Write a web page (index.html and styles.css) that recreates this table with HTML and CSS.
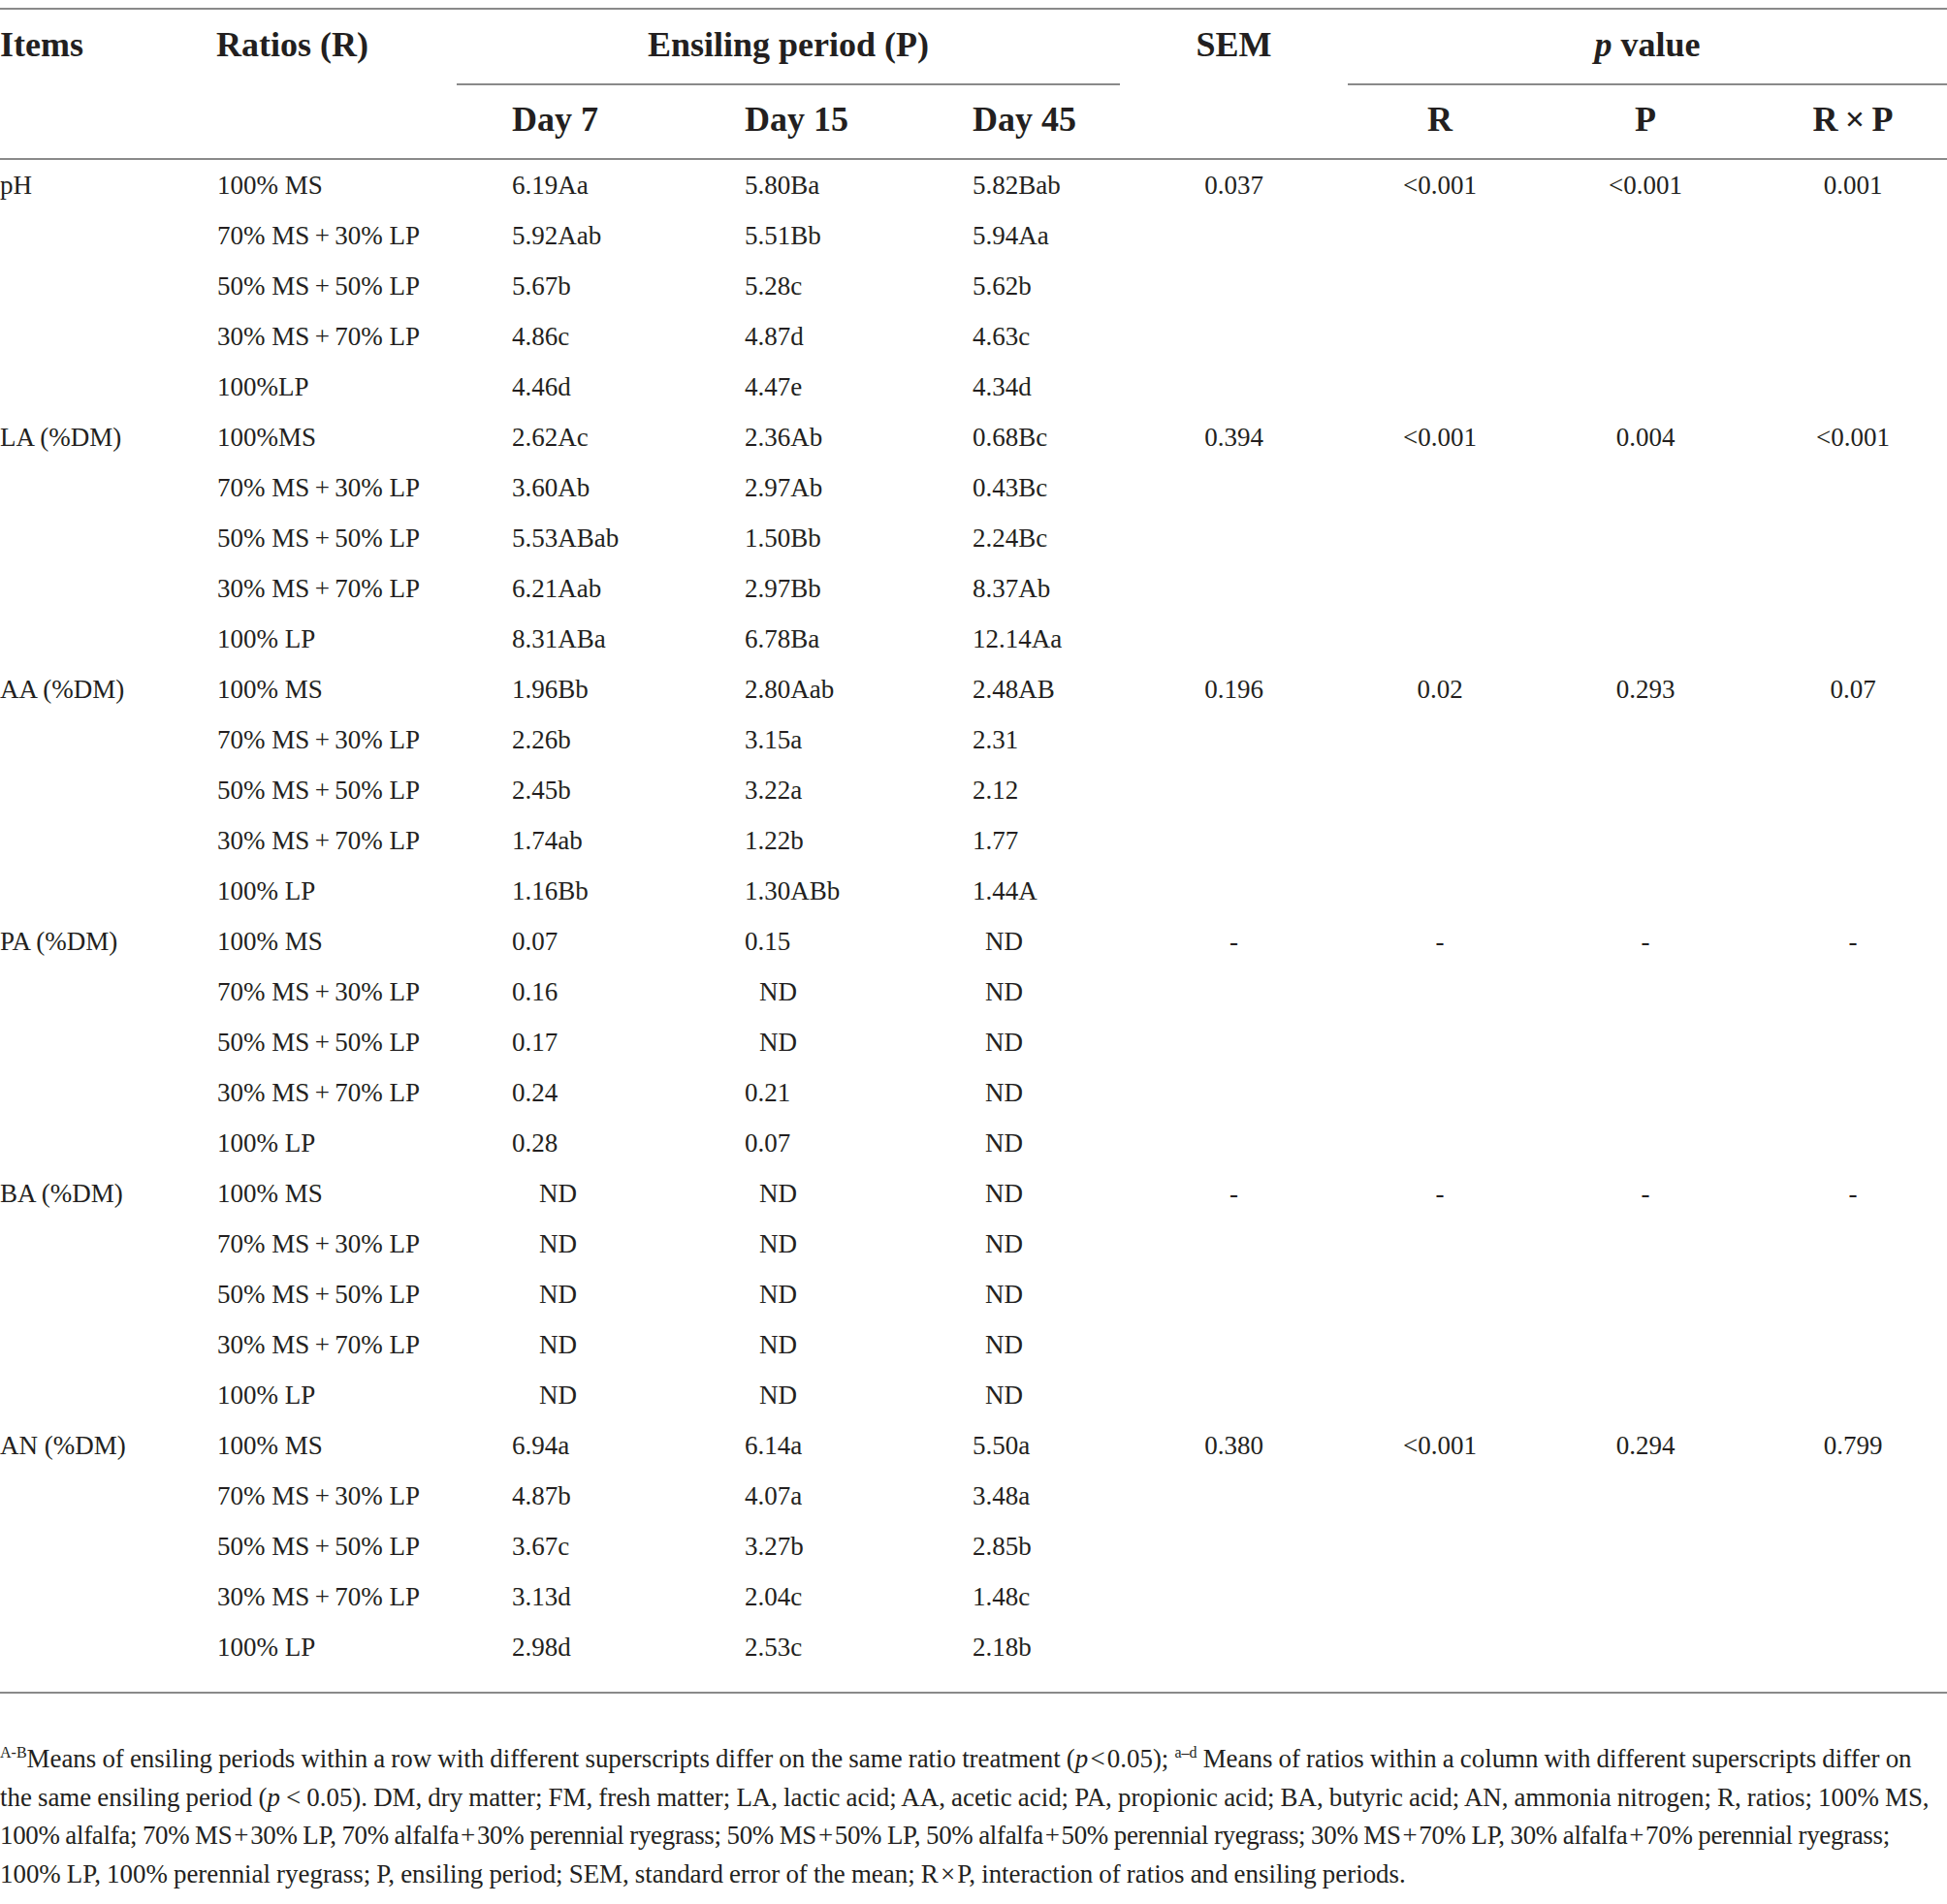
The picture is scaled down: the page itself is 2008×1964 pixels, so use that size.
FILE: index.html
```html
<!DOCTYPE html>
<html lang="en">
<head>
<meta charset="utf-8">
<title>Table</title>
<link rel="stylesheet" href="styles.css">
</head>
<body>
<table class="tbl">
  <colgroup>
    <col class="c-items"><col class="c-ratio"><col class="c-d7"><col class="c-d15"><col class="c-d45"><col class="c-sem"><col class="c-r"><col class="c-p"><col class="c-rp">
  </colgroup>
  <thead>
    <tr class="h1">
      <th class="span2 left" rowspan="2">Items</th>
      <th class="span2 left ratio" rowspan="2">Ratios (R)</th>
      <th class="group" colspan="3">Ensiling period (P)</th>
      <th class="span2" rowspan="2">SEM</th>
      <th class="group" colspan="3"><i>p</i> value</th>
    </tr>
    <tr class="h2">
      <th class="day">Day 7</th>
      <th class="day">Day 15</th>
      <th class="day">Day 45</th>
      <th>R</th>
      <th>P</th>
      <th>R&#8201;×&#8201;P</th>
    </tr>
  </thead>
  <tbody>
    <tr><td>pH</td><td>100% MS</td><td>6.19Aa</td><td>5.80Ba</td><td>5.82Bab</td><td>0.037</td><td>&lt;0.001</td><td>&lt;0.001</td><td>0.001</td></tr>
    <tr><td></td><td>70% MS&#8201;+&#8201;30% LP</td><td>5.92Aab</td><td>5.51Bb</td><td>5.94Aa</td><td></td><td></td><td></td><td></td></tr>
    <tr><td></td><td>50% MS&#8201;+&#8201;50% LP</td><td>5.67b</td><td>5.28c</td><td>5.62b</td><td></td><td></td><td></td><td></td></tr>
    <tr><td></td><td>30% MS&#8201;+&#8201;70% LP</td><td>4.86c</td><td>4.87d</td><td>4.63c</td><td></td><td></td><td></td><td></td></tr>
    <tr><td></td><td>100%LP</td><td>4.46d</td><td>4.47e</td><td>4.34d</td><td></td><td></td><td></td><td></td></tr>
    <tr><td>LA (%DM)</td><td>100%MS</td><td>2.62Ac</td><td>2.36Ab</td><td>0.68Bc</td><td>0.394</td><td>&lt;0.001</td><td>0.004</td><td>&lt;0.001</td></tr>
    <tr><td></td><td>70% MS&#8201;+&#8201;30% LP</td><td>3.60Ab</td><td>2.97Ab</td><td>0.43Bc</td><td></td><td></td><td></td><td></td></tr>
    <tr><td></td><td>50% MS&#8201;+&#8201;50% LP</td><td>5.53ABab</td><td>1.50Bb</td><td>2.24Bc</td><td></td><td></td><td></td><td></td></tr>
    <tr><td></td><td>30% MS&#8201;+&#8201;70% LP</td><td>6.21Aab</td><td>2.97Bb</td><td>8.37Ab</td><td></td><td></td><td></td><td></td></tr>
    <tr><td></td><td>100% LP</td><td>8.31ABa</td><td>6.78Ba</td><td>12.14Aa</td><td></td><td></td><td></td><td></td></tr>
    <tr><td>AA (%DM)</td><td>100% MS</td><td>1.96Bb</td><td>2.80Aab</td><td>2.48AB</td><td>0.196</td><td>0.02</td><td>0.293</td><td>0.07</td></tr>
    <tr><td></td><td>70% MS&#8201;+&#8201;30% LP</td><td>2.26b</td><td>3.15a</td><td>2.31</td><td></td><td></td><td></td><td></td></tr>
    <tr><td></td><td>50% MS&#8201;+&#8201;50% LP</td><td>2.45b</td><td>3.22a</td><td>2.12</td><td></td><td></td><td></td><td></td></tr>
    <tr><td></td><td>30% MS&#8201;+&#8201;70% LP</td><td>1.74ab</td><td>1.22b</td><td>1.77</td><td></td><td></td><td></td><td></td></tr>
    <tr><td></td><td>100% LP</td><td>1.16Bb</td><td>1.30ABb</td><td>1.44A</td><td></td><td></td><td></td><td></td></tr>
    <tr><td>PA (%DM)</td><td>100% MS</td><td>0.07</td><td>0.15</td><td class="nd">ND</td><td>-</td><td>-</td><td>-</td><td>-</td></tr>
    <tr><td></td><td>70% MS&#8201;+&#8201;30% LP</td><td>0.16</td><td class="nd">ND</td><td class="nd">ND</td><td></td><td></td><td></td><td></td></tr>
    <tr><td></td><td>50% MS&#8201;+&#8201;50% LP</td><td>0.17</td><td class="nd">ND</td><td class="nd">ND</td><td></td><td></td><td></td><td></td></tr>
    <tr><td></td><td>30% MS&#8201;+&#8201;70% LP</td><td>0.24</td><td>0.21</td><td class="nd">ND</td><td></td><td></td><td></td><td></td></tr>
    <tr><td></td><td>100% LP</td><td>0.28</td><td>0.07</td><td class="nd">ND</td><td></td><td></td><td></td><td></td></tr>
    <tr><td>BA (%DM)</td><td>100% MS</td><td class="nd">ND</td><td class="nd">ND</td><td class="nd">ND</td><td>-</td><td>-</td><td>-</td><td>-</td></tr>
    <tr><td></td><td>70% MS&#8201;+&#8201;30% LP</td><td class="nd">ND</td><td class="nd">ND</td><td class="nd">ND</td><td></td><td></td><td></td><td></td></tr>
    <tr><td></td><td>50% MS&#8201;+&#8201;50% LP</td><td class="nd">ND</td><td class="nd">ND</td><td class="nd">ND</td><td></td><td></td><td></td><td></td></tr>
    <tr><td></td><td>30% MS&#8201;+&#8201;70% LP</td><td class="nd">ND</td><td class="nd">ND</td><td class="nd">ND</td><td></td><td></td><td></td><td></td></tr>
    <tr><td></td><td>100% LP</td><td class="nd">ND</td><td class="nd">ND</td><td class="nd">ND</td><td></td><td></td><td></td><td></td></tr>
    <tr><td>AN (%DM)</td><td>100% MS</td><td>6.94a</td><td>6.14a</td><td>5.50a</td><td>0.380</td><td>&lt;0.001</td><td>0.294</td><td>0.799</td></tr>
    <tr><td></td><td>70% MS&#8201;+&#8201;30% LP</td><td>4.87b</td><td>4.07a</td><td>3.48a</td><td></td><td></td><td></td><td></td></tr>
    <tr><td></td><td>50% MS&#8201;+&#8201;50% LP</td><td>3.67c</td><td>3.27b</td><td>2.85b</td><td></td><td></td><td></td><td></td></tr>
    <tr><td></td><td>30% MS&#8201;+&#8201;70% LP</td><td>3.13d</td><td>2.04c</td><td>1.48c</td><td></td><td></td><td></td><td></td></tr>
    <tr class="last"><td></td><td>100% LP</td><td>2.98d</td><td>2.53c</td><td>2.18b</td><td></td><td></td><td></td><td></td></tr>
  </tbody>
</table>
<p class="note"><span class="sup">A-B</span>Means of ensiling periods within a row with different superscripts differ on the same ratio treatment (<i>p</i>&#8202;&lt;&#8202;0.05); <span class="sup">a–d</span> Means of ratios within a column with different superscripts differ on<br>the same ensiling period (<i>p</i> &lt; 0.05). DM, dry matter; FM, fresh matter; LA, lactic acid; AA, acetic acid; PA, propionic acid; BA, butyric acid; AN, ammonia nitrogen; R, ratios; 100% MS,<br><span class="tight">100% alfalfa; 70% MS&#8202;+&#8202;30% LP, 70% alfalfa&#8202;+&#8202;30% perennial ryegrass; 50% MS&#8202;+&#8202;50% LP, 50% alfalfa&#8202;+&#8202;50% perennial ryegrass; 30% MS&#8202;+&#8202;70% LP, 30% alfalfa&#8202;+&#8202;70% perennial ryegrass;</span><br>100% LP, 100% perennial ryegrass; P, ensiling period; SEM, standard error of the mean; R&#8202;×&#8202;P, interaction of ratios and ensiling periods.</p>
</body>
</html>
```

FILE: styles.css
```css
html, body {
  margin: 0;
  background: #ffffff;
}

body {
  padding-top: 8px;
  color: #231f20;
  font-family: "Liberation Serif", "Times New Roman", serif;
}

.tbl {
  width: 2008px;
  table-layout: fixed;
  border-collapse: separate;
  border-spacing: 0;
  font-size: 27px;
}

.c-items { width: 223px; }
.c-ratio { width: 248px; }
.c-d7 { width: 240px; }
.c-d15 { width: 235px; }
.c-d45 { width: 209px; }
.c-sem { width: 235px; }
.c-r { width: 190px; }
.c-p { width: 234px; }
.c-rp { width: 194px; }

.tbl th {
  font-size: 36px;
  font-weight: bold;
  line-height: 40px;
  text-align: center;
  vertical-align: top;
  padding: 0;
  white-space: nowrap;
}

.tbl th i {
  font-style: italic;
}

.h1 th {
  border-top: 2px solid #8a8a8a;
  padding-top: 16px;
  padding-bottom: 20px;
}

.h1 th.group {
  border-bottom: 2px solid #8a8a8a;
}

.h1 th.span2 {
  padding-bottom: 97px;
  border-bottom: 2px solid #8a8a8a;
}

.h2 th {
  padding-top: 15px;
  padding-bottom: 20px;
  border-bottom: 2px solid #8a8a8a;
}

.tbl th.left {
  text-align: left;
}

.tbl th.ratio {
  padding-left: 0;
}

.tbl th.day {
  text-align: left;
  padding-left: 57px;
}

.tbl td {
  height: 52px;
  line-height: 52px;
  padding: 0;
  text-align: center;
  vertical-align: top;
  white-space: nowrap;
}

.tbl td:nth-child(1) {
  text-align: left;
}

.tbl td:nth-child(2) {
  text-align: left;
  padding-left: 1px;
}

.tbl td:nth-child(3),
.tbl td:nth-child(4),
.tbl td:nth-child(5) {
  text-align: left;
  padding-left: 57px;
}

.tbl td.nd:nth-child(3) { padding-left: 85px; }
.tbl td.nd:nth-child(4) { padding-left: 72px; }
.tbl td.nd:nth-child(5) { padding-left: 70px; }

.tbl tr.last td {
  padding-bottom: 20px;
  border-bottom: 2px solid #8a8a8a;
}

.note {
  margin: 48px 0 0 0;
  width: 2008px;
  font-size: 26.9px;
  line-height: 39.7px;
  white-space: nowrap;
  word-spacing: -0.6px;
}

.note .tight {
  letter-spacing: -0.3px;
}

.sup {
  font-size: 16px;
  line-height: 0;
  vertical-align: 10px;
}
```
